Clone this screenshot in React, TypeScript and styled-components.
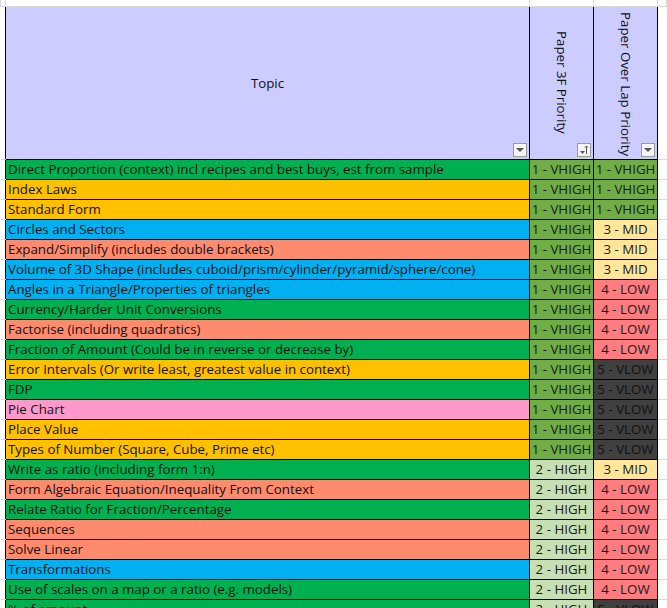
import React from "react";
import styled, { createGlobalStyle } from "styled-components";

const Global = createGlobalStyle`
  body { margin: 0; background: #fff; font-family: "Open Sans", "Noto Sans", sans-serif; }
`;

const C = {
  g: "#00B050", o: "#FFC000", b: "#00B0F0", s: "#FF8B6F", p: "#FF99CC",
};
const P: Record<string, [string, string]> = {
  "1 - VHIGH": ["#70AD47", "#1a1a1a"],
  "2 - HIGH": ["#C6E0B4", "#1a1a1a"],
  "3 - MID": ["#FFE699", "#1a1a1a"],
  "4 - LOW": ["#FF7C80", "#1a1a1a"],
  "5 - VLOW": ["#404040", "#111"],
};

const rows: [string, keyof typeof C, string, string][] = [
  ["Direct Proportion (context) incl recipes and best buys, est from sample", "g", "1 - VHIGH", "1 - VHIGH"],
  ["Index Laws", "o", "1 - VHIGH", "1 - VHIGH"],
  ["Standard Form", "o", "1 - VHIGH", "1 - VHIGH"],
  ["Circles and Sectors", "b", "1 - VHIGH", "3 - MID"],
  ["Expand/Simplify (includes double brackets)", "s", "1 - VHIGH", "3 - MID"],
  ["Volume of 3D Shape (includes cuboid/prism/cylinder/pyramid/sphere/cone)", "b", "1 - VHIGH", "3 - MID"],
  ["Angles in a Triangle/Properties of triangles", "b", "1 - VHIGH", "4 - LOW"],
  ["Currency/Harder Unit Conversions", "g", "1 - VHIGH", "4 - LOW"],
  ["Factorise (including quadratics)", "s", "1 - VHIGH", "4 - LOW"],
  ["Fraction of Amount (Could be in reverse or decrease by)", "g", "1 - VHIGH", "4 - LOW"],
  ["Error Intervals (Or write least, greatest value in context)", "o", "1 - VHIGH", "5 - VLOW"],
  ["FDP", "g", "1 - VHIGH", "5 - VLOW"],
  ["Pie Chart", "p", "1 - VHIGH", "5 - VLOW"],
  ["Place Value", "o", "1 - VHIGH", "5 - VLOW"],
  ["Types of Number (Square, Cube, Prime etc)", "o", "1 - VHIGH", "5 - VLOW"],
  ["Write as ratio (including form 1:n)", "g", "2 - HIGH", "3 - MID"],
  ["Form Algebraic Equation/Inequality From Context", "s", "2 - HIGH", "4 - LOW"],
  ["Relate Ratio for Fraction/Percentage", "g", "2 - HIGH", "4 - LOW"],
  ["Sequences", "s", "2 - HIGH", "4 - LOW"],
  ["Solve Linear", "s", "2 - HIGH", "4 - LOW"],
  ["Transformations", "b", "2 - HIGH", "4 - LOW"],
  ["Use of scales on a map or a ratio (e.g. models)", "g", "2 - HIGH", "4 - LOW"],
  ["% of amount", "g", "2 - HIGH", "5 - VLOW"],
];

const Sheet = styled.table`
  border-collapse: collapse;
  table-layout: fixed;
  width: 667px;
  font-size: 13.3px;
  color: #111;
`;
const Gap = styled.td`
  border: 1px solid #dadada;
  border-top: none;
  padding: 0;
  height: 6px;
`;
const Margin = styled.td`
  border-bottom: 1px solid #dadada;
  border-right: 1px solid #000;
  padding: 0;
`;
const Rest = styled.td`
  border-bottom: 1px solid #dadada;
  border-left: 1px solid #000;
  padding: 0;
`;
const Head = styled.td`
  position: relative;
  background: #CCCCFF;
  border: 1px solid #000;
  height: 152px;
  padding: 0;
  text-align: center;
  vertical-align: middle;
`;
const Vert = styled.div<{ $top: number }>`
  position: absolute;
  top: ${p => p.$top}px;
  left: 50%;
  transform: translateX(-50%);
  writing-mode: vertical-rl;
  white-space: nowrap;
  line-height: 1;
`;
const Filter = styled.div`
  position: absolute;
  right: 2px;
  bottom: 2px;
  width: 14px;
  height: 14px;
  background: #f4f4f4;
  border: 1px solid #9a9a9a;
  box-sizing: border-box;
  display: flex;
  align-items: center;
  justify-content: center;
`;
const Cell = styled.td<{ $bg: string; $fg?: string; $center?: boolean }>`
  background: ${p => p.$bg};
  color: ${p => p.$fg || "#111"};
  border: 1px solid #000;
  height: 19px;
  padding: 0 0 0 2px;
  white-space: nowrap;
  overflow: hidden;
  line-height: 19px;
  text-align: ${p => (p.$center ? "center" : "left")};
  ${p => (p.$center ? "padding: 0;" : "")}
`;

const Arrow = () => (
  <svg width="8" height="5" viewBox="0 0 8 5"><path d="M0 0h8L4 4z" fill="#555" /></svg>
);
const Sorted = () => (
  <svg width="10" height="10" viewBox="0 0 10 10">
    <path d="M1 6h5L3.5 9z" fill="#555" />
    <path d="M7.5 1v8M6 2.5l1.5-1.5 1.5 1.5" stroke="#555" strokeWidth="1" fill="none" />
  </svg>
);

export default function App() {
  return (
    <>
      <Global />
      <Sheet>
        <colgroup>
          <col style={{ width: 5 }} />
          <col style={{ width: 524 }} />
          <col style={{ width: 64 }} />
          <col style={{ width: 64 }} />
          <col />
        </colgroup>
        <tbody>
          <tr>
            <Gap /><Gap /><Gap /><Gap /><Gap />
          </tr>
          <tr>
            <Margin />
            <Head>
              Topic
              <Filter><Arrow /></Filter>
            </Head>
            <Head>
              <Vert $top={24}>Paper 3F Priority</Vert>
              <Filter><Sorted /></Filter>
            </Head>
            <Head>
              <Vert $top={5}>Paper Over Lap Priority</Vert>
              <Filter><Arrow /></Filter>
            </Head>
            <Rest />
          </tr>
          {rows.map(([t, c, a, b], i) => (
            <tr key={i}>
              <Margin />
              <Cell $bg={C[c]}>{t}</Cell>
              <Cell $center $bg={P[a][0]} $fg={P[a][1]}>{a}</Cell>
              <Cell $center $bg={P[b][0]} $fg={P[b][1]}>{b}</Cell>
              <Rest />
            </tr>
          ))}
        </tbody>
      </Sheet>
    </>
  );
}
